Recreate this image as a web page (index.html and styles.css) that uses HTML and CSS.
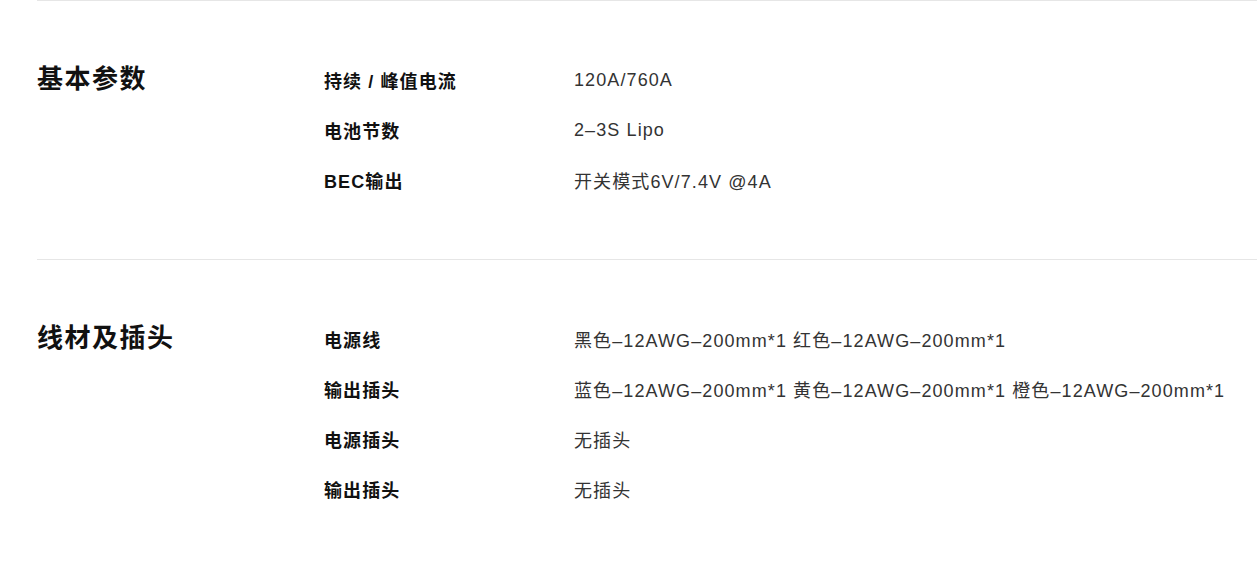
FILE: index.html
```html
<!DOCTYPE html>
<html lang="zh-CN">
<head>
<meta charset="utf-8">
<title>规格参数</title>
<link rel="stylesheet" href="styles.css">
</head>
<body>
<div class="specs">
  <section class="spec-section">
    <h2 class="spec-title">基本参数</h2>
    <div class="spec-list">
      <div class="spec-row"><div class="spec-label">持续 / 峰值电流</div><div class="spec-value">120A/760A</div></div>
      <div class="spec-row"><div class="spec-label">电池节数</div><div class="spec-value">2–3S Lipo</div></div>
      <div class="spec-row"><div class="spec-label">BEC输出</div><div class="spec-value">开关模式6V/7.4V @4A</div></div>
    </div>
  </section>
  <section class="spec-section">
    <h2 class="spec-title">线材及插头</h2>
    <div class="spec-list">
      <div class="spec-row"><div class="spec-label">电源线</div><div class="spec-value">黑色–12AWG–200mm*1 红色–12AWG–200mm*1</div></div>
      <div class="spec-row"><div class="spec-label">输出插头</div><div class="spec-value">蓝色–12AWG–200mm*1 黄色–12AWG–200mm*1 橙色–12AWG–200mm*1</div></div>
      <div class="spec-row"><div class="spec-label">电源插头</div><div class="spec-value">无插头</div></div>
      <div class="spec-row"><div class="spec-label">输出插头</div><div class="spec-value">无插头</div></div>
    </div>
  </section>
</div>
</body>
</html>
```
FILE: styles.css
```css
html, body {
  margin: 0;
  padding: 0;
  background: #fff;
}
body {
  font-family: "Liberation Sans", "Noto Sans CJK SC", sans-serif;
  color: #000;
  overflow: hidden;
}
.specs {
  margin-left: 37px;
}
.spec-section {
  display: flex;
  border-top: 1px solid #e6e6e6;
  padding: 54px 0 54px;
}
.spec-title {
  width: 287px;
  flex: none;
  margin: 0;
  font-size: 26px;
  font-weight: 700;
  letter-spacing: 1.5px;
  line-height: 48px;
  color: #111;
}
.spec-list {
  display: flex;
  flex-direction: column;
}
.spec-row {
  display: flex;
  height: 50px;
  align-items: center;
}
.spec-label {
  width: 250px;
  flex: none;
  font-size: 18px;
  font-weight: 700;
  letter-spacing: 1.1px;
  color: #111;
}
.spec-value {
  font-size: 18px;
  letter-spacing: 1.1px;
  color: #333;
  white-space: nowrap;
}
```
